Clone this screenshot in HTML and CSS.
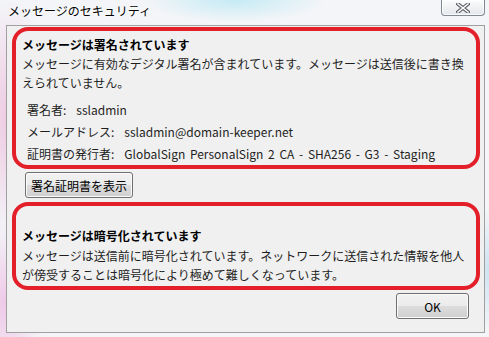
FILE: index.html
```html
<!DOCTYPE html>
<html lang="ja">
<head>
    <meta charset="UTF-8">
    <title>メッセージのセキュリティ</title>
    <link rel="stylesheet" href="styles.css">
</head>
<body>
    <div class="window">
        <div class="titlebar">
            <span class="title">メッセージのセキュリティ</span>
            <button class="close" aria-label="閉じる">
                <svg width="14" height="10" viewBox="0 0 14 10">
                    <path d="M2 1 L12 9 M12 1 L2 9" stroke="#5a5f66" stroke-width="3.6" stroke-linecap="square"/>
                    <path d="M2 1 L12 9 M12 1 L2 9" stroke="#fafafa" stroke-width="1.6" stroke-linecap="square"/>
                </svg>
            </button>
        </div>
        <div class="panel">
            <section class="note note-signed">
                <h2>メッセージは署名されています</h2>
                <p>メッセージに有効なデジタル署名が含まれています。メッセージは送信後に書き換<br>えられていません。</p>
                <dl class="details">
                    <div class="row"><dt>署名者:</dt><dd>ssladmin</dd></div>
                    <div class="row"><dt>メールアドレス:</dt><dd>ssladmin@domain-keeper.net</dd></div>
                    <div class="row"><dt>証明書の発行者:</dt><dd>GlobalSign PersonalSign 2 CA - SHA256 - G3 - Staging</dd></div>
                </dl>
            </section>
            <button class="btn btn-cert">署名証明書を表示</button>
            <section class="note note-enc">
                <h2>メッセージは暗号化されています</h2>
                <p>メッセージは送信前に暗号化されています。ネットワークに送信された情報を他人<br>が傍受することは暗号化により極めて難しくなっています。</p>
            </section>
            <div class="actions">
                <button class="btn btn-ok">OK</button>
            </div>
        </div>
    </div>
</body>
</html>
```

FILE: styles.css
```css
* {
    box-sizing: border-box;
    margin: 0;
    padding: 0;
}

body {
    width: 489px;
    height: 337px;
    overflow: hidden;
    font-family: "Noto Sans CJK JP", "Noto Sans", sans-serif;
    font-size: 12px;
    color: #1e1e1e;
    background:
        radial-gradient(ellipse 40px 120px at 2% 35%, rgba(236, 180, 214, 0.7), transparent),
        radial-gradient(ellipse 40px 80px at 1% 90%, rgba(236, 170, 220, 0.6), transparent),
        radial-gradient(ellipse 90px 22px at 48% 0%, rgba(185, 232, 244, 0.8), transparent),
        radial-gradient(ellipse 60px 18px at 18% 20%, rgba(245, 205, 225, 0.6), transparent),
        radial-gradient(ellipse 40px 60px at 100% 80%, rgba(190, 220, 240, 0.7), transparent),
        #f3f5f8;
}

.window {
    height: 337px;
    display: flex;
    flex-direction: column;
    padding: 0 4px 4px 6px;
}

.titlebar {
    height: 25px;
    display: flex;
    justify-content: space-between;
    align-items: flex-start;
    padding-left: 2px;
}

.title {
    line-height: 22px;
    color: #000;
    text-shadow: 0 0 6px #fff, 0 0 3px #fff;
}

.close {
    width: 44px;
    height: 16px;
    border: 1px solid #7f8893;
    border-top: none;
    border-radius: 0 0 4px 4px;
    background: linear-gradient(#fbfcfd, #e4e7eb);
    box-shadow: inset 0 0 0 1px rgba(255, 255, 255, 0.8);
    display: flex;
    align-items: center;
    justify-content: center;
}

.panel {
    flex: 1;
    display: flex;
    flex-direction: column;
    background: #f0f0f0;
    border: 1px solid #a0a0a0;
    padding: 1px 4px 0 5px;
}

.note {
    border: 4px solid #e3202a;
    border-radius: 16px;
}

.note h2 {
    font-size: 12px;
    font-weight: bold;
    line-height: 19px;
    color: #000;
}

.note p {
    line-height: 19px;
}

.note-signed {
    padding: 4px 6px 0;
}

.details {
    margin-top: 7px;
    padding-left: 5px;
}

.row {
    display: flex;
    gap: 10px;
    line-height: 22px;
}

.row dd {
    word-spacing: 2px;
}

.btn {
    font-family: inherit;
    font-size: 12px;
    color: #000;
    height: 26px;
    border: 1px solid #707070;
    border-radius: 3px;
    background: linear-gradient(#f2f2f2 0%, #ebebeb 50%, #dddddd 50%, #cfcfcf 100%);
    box-shadow: inset 0 0 0 1px #fbfbfb;
}

.btn-cert {
    align-self: flex-start;
    width: 108px;
    margin: 3px 0 0 13px;
}

.note-enc {
    margin-top: 4px;
    padding: 20px 6px 2px;
}

.note-enc h2 {
    margin-bottom: 1px;
}

.actions {
    display: flex;
    justify-content: flex-end;
    margin-top: 3px;
    padding-right: 11px;
}

.btn-ok {
    width: 73px;
}
```
